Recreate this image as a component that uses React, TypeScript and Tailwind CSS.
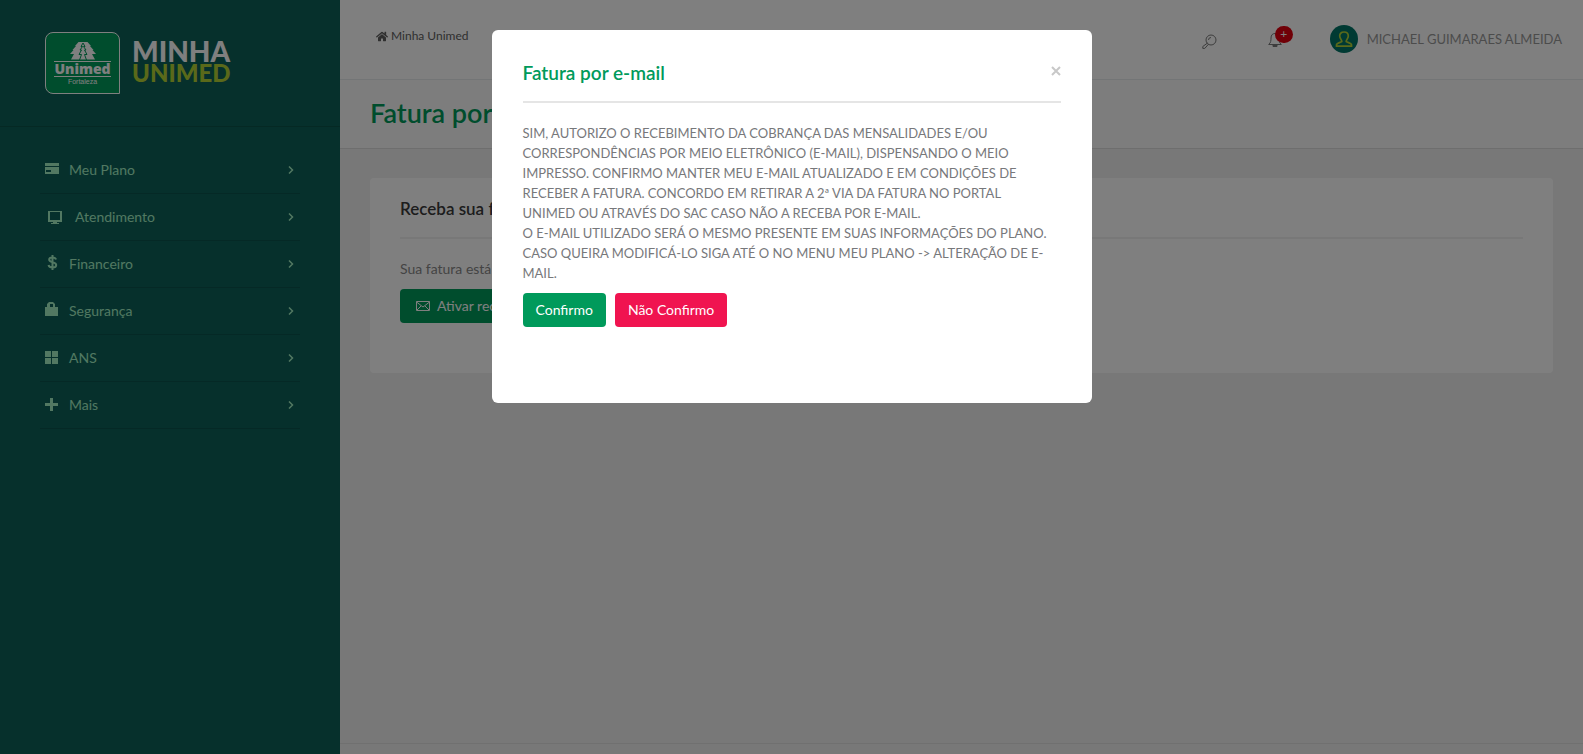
import { useState } from 'react';
import type { ReactNode } from 'react';
import { FaHome } from 'react-icons/fa';

type MenuItem = {
    label: string;
    icon: ReactNode;
    indented?: boolean;
};

const menuItems: MenuItem[] = [
    {
        label: 'Meu Plano',
        icon: (
            <svg viewBox="0 0 14 11" className="mb-1 h-[11px] w-[14px]" fill="currentColor">
                <path d="M0 0h14v3H0zM0 4h14v7H0zM1 7v2h5V7z" fillRule="evenodd" />
            </svg>
        ),
    },
    {
        label: 'Atendimento',
        indented: true,
        icon: (
            <svg viewBox="0 0 14 13" className="h-[13px] w-[14px]" fill="currentColor">
                <path d="M0 0h14v11H0zM2 1h10v8H2z" fillRule="evenodd" />
                <path d="M5 11h4v1h2v1H3v-1h2z" />
            </svg>
        ),
    },
    {
        label: 'Financeiro',
        icon: (
            <svg viewBox="0 0 14 15" className="mb-1 h-[15px] w-[14px]" fill="none" stroke="currentColor" strokeWidth="2">
                <path d="M11 4.5C10.500 3 9 2.500 7.500 2.500C5.500 2.500 4.200 3.300 4.200 4.800C4.200 8 11.200 6.500 11.200 10C11.200 11.700 9.500 12.500 7.500 12.500C5.500 12.500 4 11.800 3.500 10M7.500 0v15" />
            </svg>
        ),
    },
    {
        label: 'Segurança',
        icon: (
            <svg viewBox="0 0 13 14" className="mb-1 h-[14px] w-[13px]" fill="currentColor">
                <path d="M0 5h2V2l2-2h4l2 2v3h3v9H0zM5 5h3V2H5z" fillRule="evenodd" />
            </svg>
        ),
    },
    {
        label: 'ANS',
        icon: (
            <svg viewBox="0 0 13 13" className="mb-0.5 h-[13px] w-[13px]" fill="currentColor">
                <path d="M0 0h6v6H0zM7 0h6v6H7zM0 7h6v6H0zM7 7h6v6H7z" />
            </svg>
        ),
    },
    {
        label: 'Mais',
        icon: (
            <svg viewBox="0 0 13 13" className="mb-0.5 h-[13px] w-[13px]" fill="currentColor">
                <path d="M5 0h3v5h5v3H8v5H5V8H0V5h5z" />
            </svg>
        ),
    },
];

function Logo() {
    return (
        <a href="#" className="flex items-center gap-3">
            <div className="flex h-[62px] w-[75px] flex-col items-center rounded-tl-lg rounded-tr-lg rounded-bl-lg border border-white bg-[#009a5b] pt-[9px] text-white">
                <svg viewBox="0 0 26 18" className="h-[18px] w-[26px]">
                    <path
                        d="M8.500 0h9l3.500 4h-1l3.500 4h-1L26 12h-4l3 5.500H1L4 12H0l3.500-4h-1L6 4H5z"
                        fill="currentColor"
                    />
                    <path
                        d="M13 1L11 4.500h1.500L10 8h1.500L9 12.500h2.500L9.500 18M13 1l2 3.500h-1.500L16 8h-1.500l2.500 4.500h-2.500l2 5.500"
                        fill="none"
                        stroke="#009a5b"
                    />
                </svg>
                <span className="mt-px border-y border-white font-['Noto_Sans'] text-sm leading-[14px] font-black">Unimed</span>
                <span className="mt-px font-['Liberation_Sans'] text-[7px] leading-2">Fortaleza</span>
            </div>
            <div className="pb-1 font-black">
                <div className="text-[28px] leading-6 text-white">MINHA</div>
                <div className="text-2xl leading-5 text-[#b4d334]">UNIMED</div>
            </div>
        </a>
    );
}

function Sidebar() {
    return (
        <aside className="w-[340px] shrink-0 bg-[#0c6058]">
            <div className="border-b border-[#0a5249] px-[45px] pt-8 pb-8">
                <Logo />
            </div>
            <nav className="mx-10 mt-5 w-[260px]">
                <ul>
                    {menuItems.map(item => (
                        <li key={item.label} className="border-b border-[#0a524c]">
                            <a
                                href="#"
                                className={`flex h-[46px] items-center text-[#a4f0c4] ${item.indented ? 'pl-2' : 'pl-[5px]'}`}
                            >
                                <span className={item.indented ? 'w-[27px]' : 'w-6'}>{item.icon}</span>
                                <span className="grow">{item.label}</span>
                                <svg viewBox="0 0 6 8" className="mr-1.5 h-2 w-1.5" fill="none" stroke="currentColor" strokeWidth="1.5">
                                    <path d="M1 .5L4.500 4L1 7.500" />
                                </svg>
                            </a>
                        </li>
                    ))}
                </ul>
            </nav>
        </aside>
    );
}

function Header() {
    return (
        <header className="flex h-20 items-start justify-between border-b border-[#e7eaec] bg-white pr-[21px] pl-9">
            <a href="#" className="mt-7 flex items-center gap-[3px] text-xs leading-4 text-[#606060]">
                <FaHome className="h-[11px] w-3" />
                Minha Unimed
            </a>
            <div className="mt-[25px] flex h-7 items-center">
                <button type="button" aria-label="Buscar" className="mt-1 text-[#7a7a7a]">
                    <svg viewBox="0 0 15 15" className="h-[15px] w-[15px]" fill="none" stroke="currentColor">
                        <circle cx="9" cy="6" r="5" />
                        <path d="M5.500 9L.8 12.500v1.900H2.800L6.500 10.200M9 3.500A2.500 2.500 0 0 0 6.500 6" />
                    </svg>
                </button>
                <button type="button" aria-label="Notificações" className="relative mr-12 ml-[51px] text-[#7a7a7a]">
                    <svg viewBox="0 0 14 15" className="h-[15px] w-[14px]" fill="none" stroke="currentColor">
                        <path d="M.7 12.500C3 10.500 3 8.500 3 6C3 3 4.500 1.500 7 1.500S11 3 11 6C11 8.500 11 10.500 13.300 12.500z" />
                        <path d="M5 13h4v1.500H5z" fill="currentColor" />
                    </svg>
                    <span className="absolute -top-1.5 left-[7px] flex h-[17px] w-[18px] items-center justify-center rounded-full bg-[#e0000f] text-xs text-white">
                        +
                    </span>
                </button>
                <button type="button" className="flex items-center gap-[9px] text-[13px] text-[#999]">
                    <svg viewBox="0 0 28 28" className="h-7 w-7">
                        <circle cx="14" cy="14" r="14" fill="#007567" />
                        <path
                            d="M6.500 21.200V20C6.500 18 10 17.800 11.800 16.500C12 15 9.700 13.500 9.700 11C9.700 8.500 11.500 7 14 7S18.300 8.500 18.300 11C18.300 13.500 16 15 16.200 16.500C18 17.800 21.500 18 21.500 20V21.200z"
                            fill="none"
                            stroke="#b4d334"
                            strokeWidth="1.7"
                        />
                    </svg>
                    MICHAEL GUIMARAES ALMEIDA
                </button>
            </div>
        </header>
    );
}

function InvoiceCard() {
    return (
        <section className="m-[30px] mt-[29px] rounded-sm bg-white p-[30px] pt-[19px] pb-[50px]">
            <h2 className="border-b-2 border-[#f0f0f0] pb-4 text-[17px] leading-6 font-semibold text-[#3a3a3a]">
                Receba sua fatura por e-mail
            </h2>
            <p className="mt-5 leading-5 text-[#888]">Sua fatura está sendo enviada pelos correios.</p>
            <button type="button" className="mt-2.5 flex h-[34px] items-center gap-[7px] rounded-sm bg-[#009a5b] px-4 text-white">
                <svg viewBox="0 0 14 10" className="h-2.5 w-3.5" fill="none" stroke="currentColor">
                    <path d="M.5 .5h13v9H.5zM.5 1L7 6L13.500 1M1 9L5 5M13 9L9 5" />
                </svg>
                Ativar recebimento por e-mail
            </button>
        </section>
    );
}

function InvoiceModal({ onClose }: { onClose: () => void }) {
    return (
        <div className="fixed inset-0 flex items-start justify-center bg-black/50 pt-[30px]">
            <div role="dialog" aria-labelledby="modal-title" className="w-[600px] rounded-md bg-white px-[31px] pt-[31px] pb-[76px]">
                <div className="flex items-start justify-between border-b-2 border-[#e5e5e5] pb-4">
                    <h4 id="modal-title" className="text-[19px] leading-6 font-semibold text-[#009a5b]">
                        Fatura por e-mail
                    </h4>
                    <button type="button" aria-label="Fechar" onClick={onClose} className="mt-[5px] text-[#c8c8c8]">
                        <svg viewBox="0 0 10 10" className="h-2.5 w-2.5" stroke="currentColor" strokeWidth="2">
                            <path d="M1 1L9 9M9 1L1 9" />
                        </svg>
                    </button>
                </div>
                <p className="mt-5 text-[13px] leading-5 text-[#77787b]">
                    SIM, AUTORIZO O RECEBIMENTO DA COBRANÇA DAS MENSALIDADES E/OU<br />
                    CORRESPONDÊNCIAS POR MEIO ELETRÔNICO (E-MAIL), DISPENSANDO O MEIO<br />
                    IMPRESSO. CONFIRMO MANTER MEU E-MAIL ATUALIZADO E EM CONDIÇÕES DE<br />
                    RECEBER A FATURA. CONCORDO EM RETIRAR A 2ª VIA DA FATURA NO PORTAL<br />
                    UNIMED OU ATRAVÉS DO SAC CASO NÃO A RECEBA POR E-MAIL.<br />
                    O E-MAIL UTILIZADO SERÁ O MESMO PRESENTE EM SUAS INFORMAÇÕES DO PLANO.<br />
                    CASO QUEIRA MODIFICÁ-LO SIGA ATÉ O NO MENU MEU PLANO -&gt; ALTERAÇÃO DE E-<br />
                    MAIL.
                </p>
                <div className="mt-2.5 flex gap-[9px] text-white">
                    <button type="button" onClick={onClose} className="h-[34px] rounded-sm bg-[#009a5b] px-[13px]">
                        Confirmo
                    </button>
                    <button type="button" onClick={onClose} className="h-[34px] rounded-sm bg-[#f01450] px-[13px]">
                        Não Confirmo
                    </button>
                </div>
            </div>
        </div>
    );
}

export default function App() {
    const [open, setOpen] = useState(true);

    return (
        <div className="flex min-h-screen font-['Lato',sans-serif] text-sm">
            <Sidebar />
            <div className="flex grow flex-col bg-[#f0f0f0]">
                <Header />
                <div className="border-b border-[#dcdcdc] bg-[#fafafa] px-[30px] pt-4 pb-[18px]">
                    <h1 className="text-[27px] leading-[34px] font-semibold text-[#009a5b]">Fatura por e-mail</h1>
                </div>
                <main className="grow">
                    <InvoiceCard />
                </main>
                <footer className="h-[11px] border-t border-[#e0e0e0]" />
            </div>
            {open && <InvoiceModal onClose={() => setOpen(false)} />}
        </div>
    );
}
